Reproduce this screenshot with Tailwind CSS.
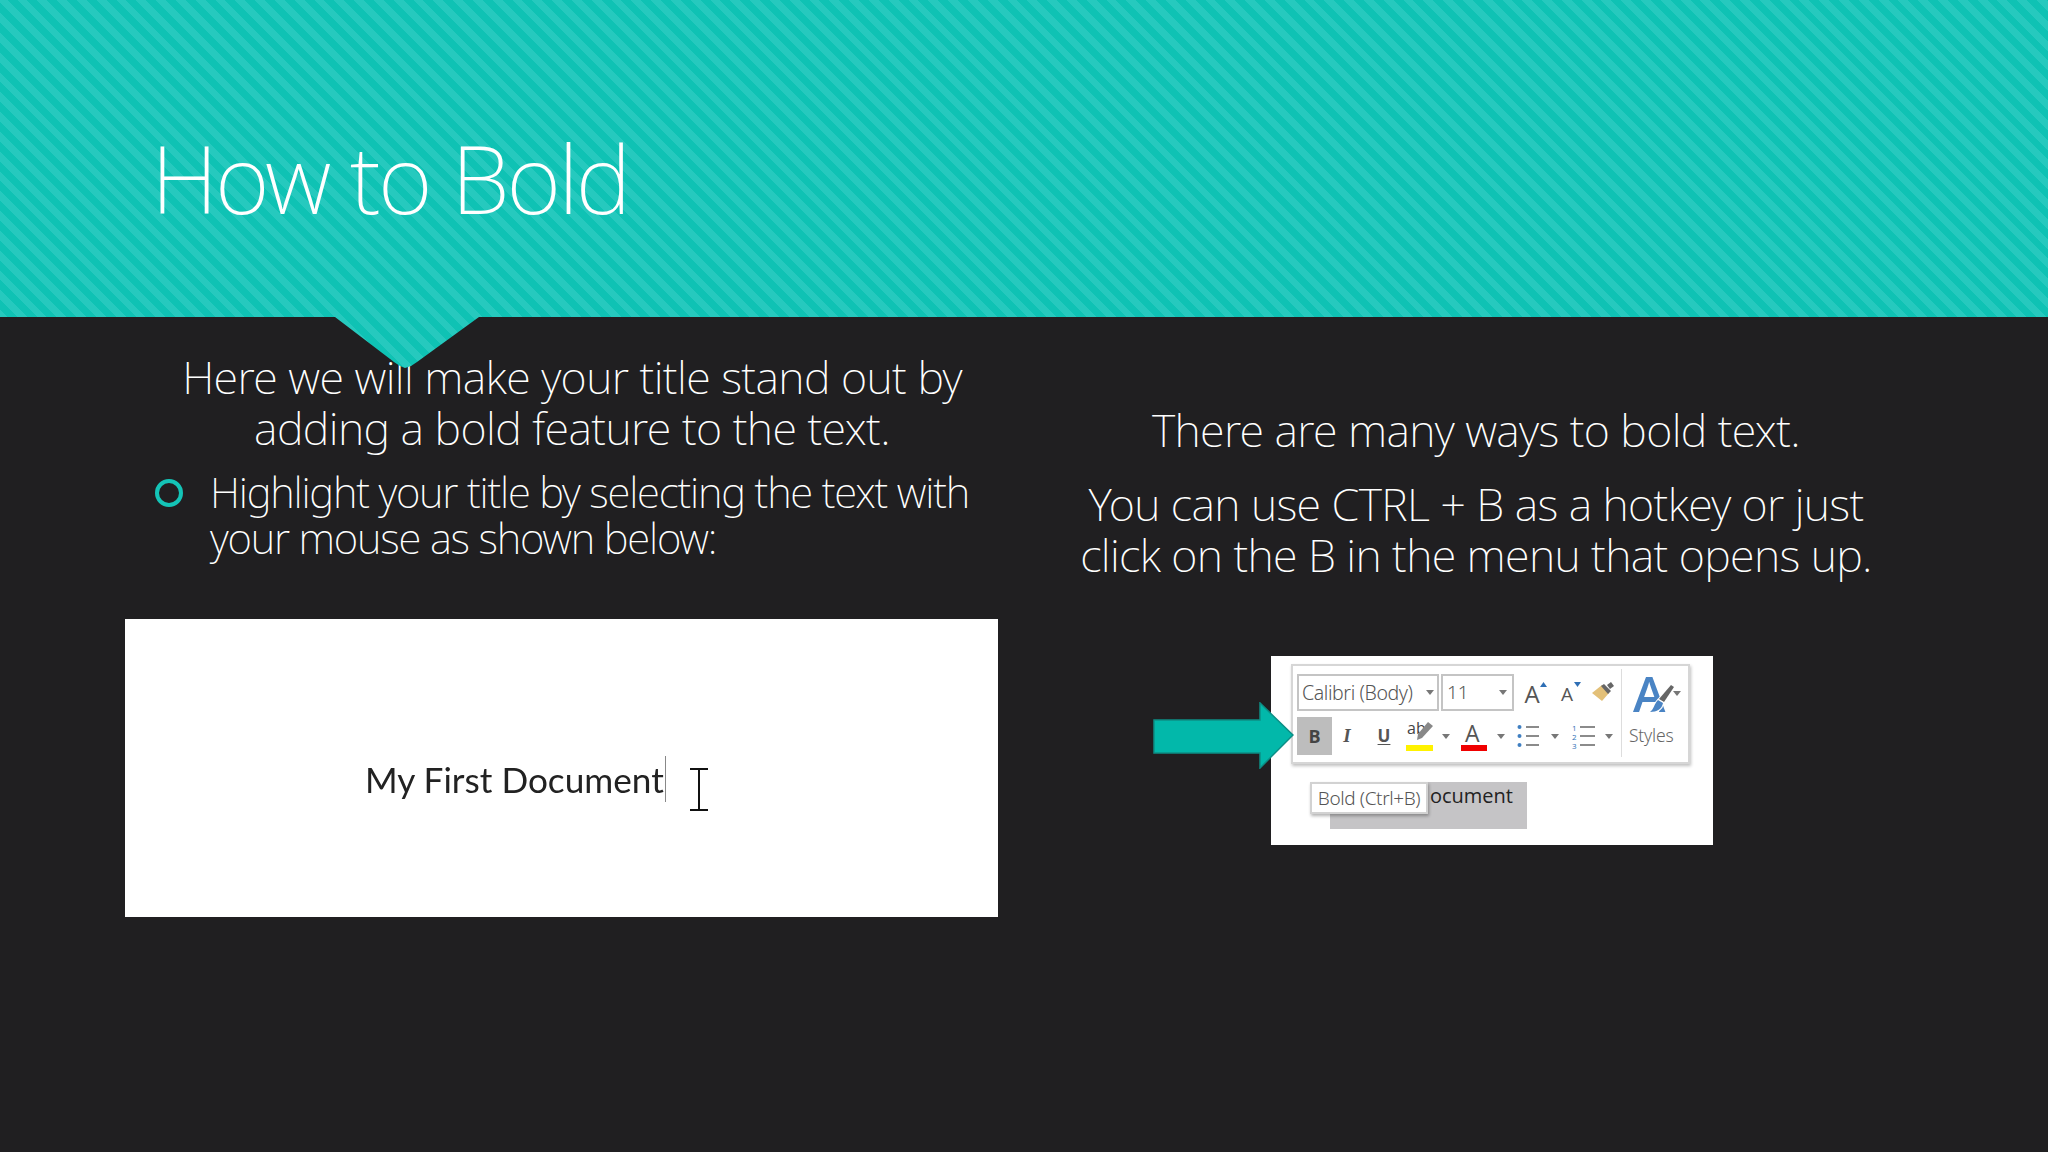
<!DOCTYPE html>
<html lang="en">
<head>
    <meta charset="UTF-8">
    <title>How to Bold</title>
    <script src="https://cdn.jsdelivr.net/npm/@tailwindcss/browser@4"></script>
</head>
<body class="w-[2048px] h-[1152px] overflow-hidden bg-[#201f21] text-white font-['Noto_Sans',sans-serif] font-extralight">
    <!-- Title band with pointer -->
    <header class="h-[369px] pl-[151px] pt-[123px] bg-[repeating-linear-gradient(45deg,#0fc2b4_0px,#0fc2b4_7px,#26c9be_7px,#26c9be_14px)] [clip-path:polygon(0_0,100%_0,100%_317px,479px_317px,417px_362px,411px_366px,405px_368px,400px_366px,394px_362px,335px_317px,0_317px)]">
        <h1 class="text-[94px] leading-[110px] font-extralight tracking-[-2.9px]">How to Bold</h1>
    </header>

    <main class="flex -mt-[52px]">
        <!-- Left column -->
        <section class="w-[1036px] shrink-0">
            <p class="ml-[108px] w-[928px] pt-[34px] text-center text-[45px] leading-[51px] tracking-[-0.6px]">Here we will make your title stand out by<br>adding a bold feature to the text.</p>
            <div class="flex mt-[16px] ml-[155px]">
                <span class="w-[28px] h-[28px] mt-[10px] rounded-full border-4 border-[#14c4b7] shrink-0"></span>
                <p class="ml-[27px] text-[42px] leading-[46px] tracking-[-1.2px]">Highlight your title by selecting the text with<br>your mouse as shown below:</p>
            </div>
            <div class="relative ml-[125px] mt-[58px] w-[873px] h-[298px] bg-white text-[#222]">
                <div class="absolute left-[240px] top-[137px] flex items-center blur-[0.4px]">
                    <span class="font-['Lato',sans-serif] font-normal text-[35.2px] leading-[45px]">My First Document</span>
                    <span class="w-[1px] h-[46px] bg-[#888] ml-[1px]"></span>
                </div>
                <svg class="absolute left-[564px] top-[149px]" width="20" height="44" viewBox="0 0 20 44" fill="none" stroke="#111" stroke-width="2"><path d="M1 1h18M1 42h18M10 1v41"/></svg>
            </div>
        </section>

        <!-- Right column -->
        <section class="flex-1 pr-[132px]">
            <div class="pt-[87px] text-center text-[45px] leading-[51px] tracking-[-0.65px]">
                <p>There are many ways to bold text.</p>
                <p class="mt-[23px]">You can use CTRL + B as a hotkey or just<br>click on the B in the menu that opens up.</p>
            </div>
            <div class="relative ml-[235px] mt-[76px] w-[442px] h-[189px] bg-white text-[#555] font-['Open_Sans',sans-serif] font-normal">
                <!-- Ribbon -->
                <div class="absolute left-[20px] top-[8px] w-[399px] h-[100px] border-2 border-[#d6d6d6] shadow-[1px_2px_3px_rgba(0,0,0,0.25)] bg-white flex">
                    <div class="w-[328px] pl-[4px] pt-[8px]">
                        <div class="flex items-center h-[37px]">
                            <div class="w-[142px] h-[37px] border-2 border-[#c4c4c4] flex items-center pl-[3px] font-['Noto_Sans',sans-serif] font-light text-[19.5px] tracking-[-0.4px] whitespace-nowrap">
                                Calibri (Body)
                                <svg class="ml-[13px]" width="8" height="5" viewBox="0 0 8 5"><path d="M0 0h8L4 5z" fill="#777"/></svg>
                            </div>
                            <div class="w-[73px] h-[37px] border-2 border-[#c4c4c4] flex items-center pl-[4px] font-['Noto_Sans',sans-serif] font-light text-[19px] ml-[2px]">
                                11
                                <svg class="ml-[30px]" width="8" height="5" viewBox="0 0 8 5"><path d="M0 0h8L4 5z" fill="#777"/></svg>
                            </div>
                            <div class="relative w-[34px] h-[37px] ml-[1px] text-[24px] leading-[39px] text-center">
                                A
                                <svg class="absolute right-[2px] top-[8px]" width="7" height="5" viewBox="0 0 7 5"><path d="M0 5h7L3.5 0z" fill="#2f6fb5"/></svg>
                            </div>
                            <div class="relative w-[36px] h-[37px] text-[19px] leading-[41px] text-center">
                                A
                                <svg class="absolute right-[4px] top-[8px]" width="7" height="5" viewBox="0 0 7 5"><path d="M0 0h7L3.5 5z" fill="#2f6fb5"/></svg>
                            </div>
                            <svg class="ml-[6px]" width="24" height="24" viewBox="0 0 24 24"><path d="M1 12l10-8 7 8-7 8z" fill="#e3c078"/><path d="M10 5l7 8 3-3-7-7z" fill="#666"/><path d="M16 4l4-3 3 4-4 3z" fill="#666"/></svg>
                        </div>
                        <div class="flex items-center h-[38px] mt-[6px]">
                            <div class="w-[35px] h-[38px] bg-[#bdbdbd] flex items-center justify-center font-bold text-[18px] text-[#444]">B</div>
                            <div class="w-[30px] text-center font-['Liberation_Serif',serif] italic font-bold text-[19px] text-[#555]">I</div>
                            <div class="w-[44px] text-center font-bold text-[17px] underline underline-offset-2 text-[#555]">U</div>
                            <div class="relative w-[27px] h-[30px]">
                                <span class="absolute left-[1px] top-[-3px] text-[16px] leading-[20px] text-[#444]">ab</span>
                                <svg class="absolute left-[8px] top-[0px]" width="20" height="22" viewBox="0 0 20 22"><path d="M14 1l5 4L8 17l-5 2 1-6z" fill="#888"/></svg>
                                <span class="absolute left-0 bottom-[0px] w-[27px] h-[6px] bg-[#fff200]"></span>
                            </div>
                            <svg class="ml-[9px]" width="8" height="5" viewBox="0 0 8 5"><path d="M0 0h8L4 5z" fill="#777"/></svg>
                            <div class="relative w-[26px] h-[30px] ml-[11px]">
                                <span class="absolute left-[4px] top-[-3px] text-[23px] leading-[30px] text-[#555]">A</span>
                                <span class="absolute left-0 bottom-[0px] w-[26px] h-[6px] bg-[#f00000]"></span>
                            </div>
                            <svg class="ml-[10px]" width="8" height="5" viewBox="0 0 8 5"><path d="M0 0h8L4 5z" fill="#777"/></svg>
                            <svg class="ml-[12px]" width="22" height="24" viewBox="0 0 22 24"><circle cx="2.5" cy="3" r="2" fill="#3f7fc1"/><circle cx="2.5" cy="12" r="2" fill="#3f7fc1"/><circle cx="2.5" cy="21" r="2" fill="#3f7fc1"/><path d="M9 3h13M9 12h13M9 21h13" stroke="#666" stroke-width="1.5"/></svg>
                            <svg class="ml-[12px]" width="8" height="5" viewBox="0 0 8 5"><path d="M0 0h8L4 5z" fill="#777"/></svg>
                            <svg class="ml-[13px]" width="23" height="25" viewBox="0 0 23 25"><text x="0" y="7" font-size="8" fill="#2f6fb5" font-family="Open Sans">1</text><text x="0" y="16" font-size="8" fill="#2f6fb5" font-family="Open Sans">2</text><text x="0" y="25" font-size="8" fill="#2f6fb5" font-family="Open Sans">3</text><path d="M8 3h15M8 12h15M8 21h15" stroke="#666" stroke-width="1.5"/></svg>
                            <svg class="ml-[10px]" width="8" height="5" viewBox="0 0 8 5"><path d="M0 0h8L4 5z" fill="#777"/></svg>
                        </div>
                    </div>
                    <div class="w-[1px] h-[88px] mt-[3px] bg-[#ddd]"></div>
                    <div class="relative flex-1">
                        <span class="absolute left-[11px] top-[2px] text-[49px] leading-[50px] font-semibold text-[#4a84c4]">A</span>
                        <svg class="absolute left-[24px] top-[16px]" width="30" height="36" viewBox="0 0 30 36"><path d="M25 3l3 2-10 15-5-3z" fill="#666" stroke="#fff" stroke-width="2" paint-order="stroke"/><path d="M12 18l5 3c-1 6-6 9-13 9 4-3 4-8 8-12z" fill="#4a84c4" stroke="#fff" stroke-width="2" paint-order="stroke"/></svg>
                        <svg class="absolute left-[51px] top-[25px]" width="8" height="5" viewBox="0 0 8 5"><path d="M0 0h8L4 5z" fill="#777"/></svg>
                        <span class="absolute left-[7px] top-[57px] font-['Noto_Sans',sans-serif] font-light text-[17.5px] leading-[24px] tracking-[-0.2px] text-[#666]">Styles</span>
                    </div>
                </div>
                <!-- Selected text behind tooltip -->
                <div class="absolute left-[59px] top-[126px] w-[197px] h-[47px] bg-[#c5c4c6] text-[#222] text-[20px] leading-[24px] text-right pr-[14px] pt-[2px]">ocument</div>
                <div class="absolute left-[39px] top-[126px] w-[118px] h-[32px] bg-white border-2 border-[#d2d2d2] shadow-[1px_2px_3px_rgba(0,0,0,0.3)] flex items-center justify-center font-['Noto_Sans',sans-serif] font-light text-[19px] tracking-[-0.4px] whitespace-nowrap text-[#555]">Bold (Ctrl+B)</div>
                <!-- Arrow over the picture -->
                <svg class="absolute left-[-118px] top-[46px]" width="141" height="67" viewBox="0 0 141 67"><path d="M1 18h106V1l33 32-33 33V51H1z" fill="#02b8aa" stroke="#0c8e85" stroke-width="1.5"/></svg>
            </div>
        </section>
    </main>
</body>
</html>
